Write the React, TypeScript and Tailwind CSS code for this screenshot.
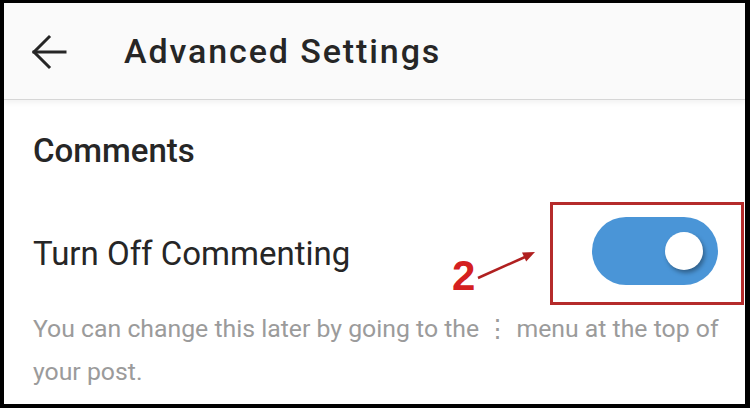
import React from "react";

const BackArrow = () => (
  <svg width="36" height="36" viewBox="0 0 36 36" fill="none" stroke="#262626" strokeWidth="3" strokeLinecap="square">
    <path d="M3 18 H34" />
    <path d="M18 3 L3 18 L18 33" strokeLinejoin="miter" />
  </svg>
);

const Toggle = () => (
  <div className="w-[126px] h-[68px] rounded-full bg-[#4a95d7] flex items-center justify-end pr-[15px]">
    <div className="w-[38px] h-[38px] rounded-full bg-white shadow-[2px_3px_4px_rgba(0,0,0,0.35)]" />
  </div>
);

export default function App() {
  return (
    <div className="w-[750px] h-[408px] overflow-hidden bg-white border-black border-t-[3px] border-l-[4px] border-r-[5px] border-b-[4px] flex flex-col font-['Roboto',sans-serif]">
      <div className="h-[97px] shrink-0 bg-[#fafafa] border-b border-[#d6d6d6] shadow-[0_3px_5px_rgba(0,0,0,0.05)] flex items-center">
        <div className="ml-[27px] mt-[2px]">
          <BackArrow />
        </div>
        <h1 className="ml-[57px] text-[34px] font-medium text-[#262626] tracking-[1.9px]">Advanced Settings</h1>
      </div>

      <div className="flex flex-col pl-[29px]">
        <h2 className="mt-[31px] text-[33px] leading-[40px] font-medium text-[#262626]">Comments</h2>

        <div className="mt-[46px] flex items-start justify-between pr-[27px]">
          <span className="mt-[17px] text-[33px] leading-[40px] text-[#262626]">Turn Off Commenting</span>
          <div className="relative">
            <Toggle />
            {/* annotation */}
            <div className="absolute left-[-42px] top-[-15px] w-[194px] h-[103px] border-[3px] border-[#b52b2b]" />
            <span className="absolute left-[-140px] top-[38px] text-[42px] leading-none font-bold text-[#d42020] font-['Liberation_Sans',sans-serif]">2</span>
            <svg width="64" height="34" viewBox="0 0 64 34" className="absolute left-[-116px] top-[31px]">
              <path d="M2 30 L49 9" stroke="#b02020" strokeWidth="2.5" />
              <path d="M59 4 L46 4.5 L50.2 13.5 Z" fill="#b02020" />
            </svg>
          </div>
        </div>

        <p className="mt-[22px] text-[24.8px] leading-[43px] text-[#9b9b9b] pr-[20px]">
          You can change this later by going to the ⋮ menu at the top of your post.
        </p>
      </div>
    </div>
  );
}
